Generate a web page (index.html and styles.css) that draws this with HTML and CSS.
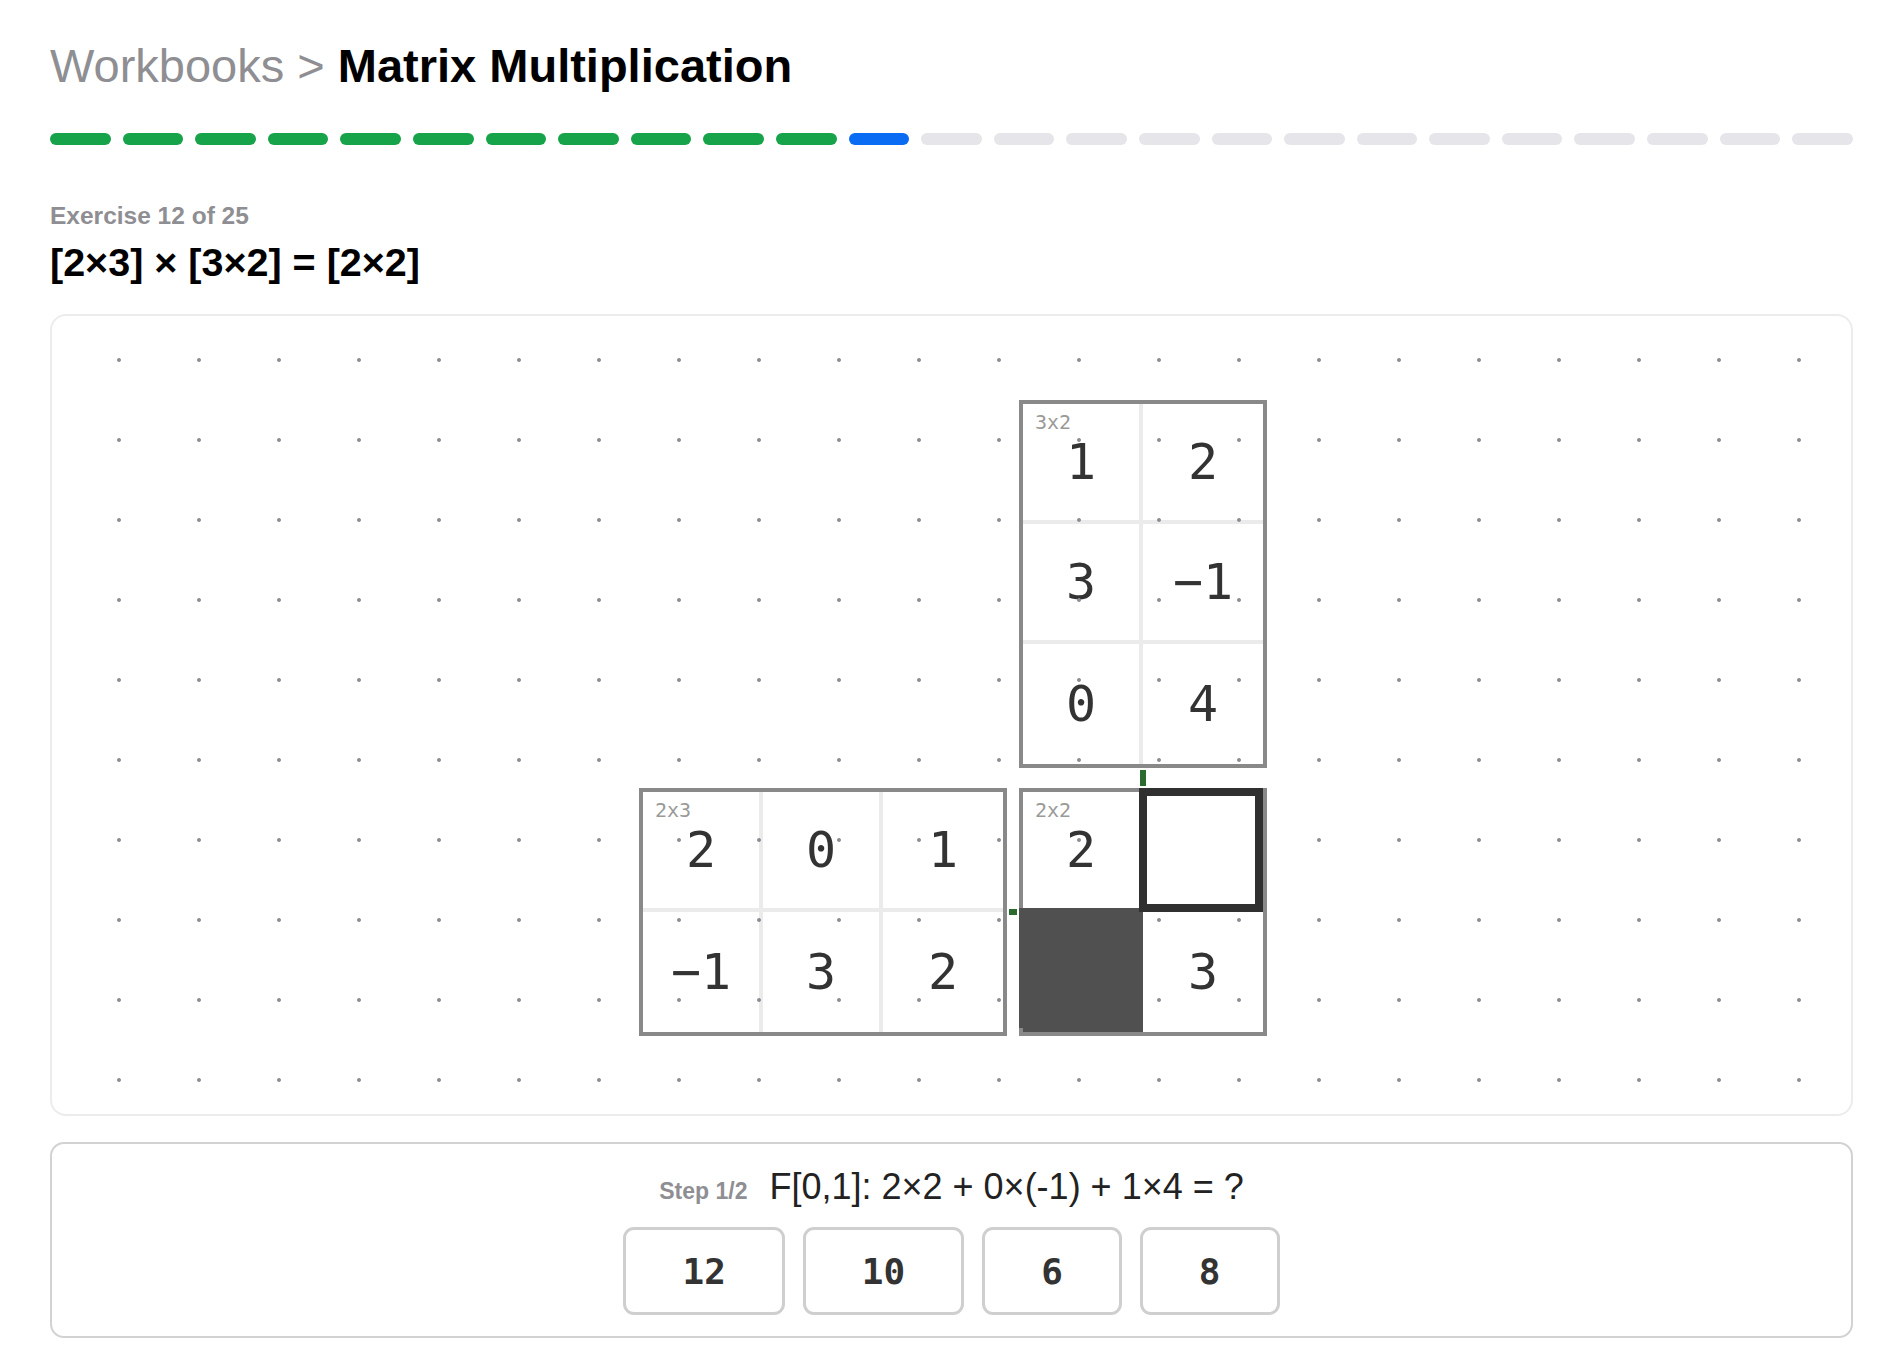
FILE: index.html
```html
<!DOCTYPE html>
<html lang="en">
<head>
<meta charset="utf-8">
<title>Matrix Multiplication</title>
<link rel="stylesheet" href="styles.css">
</head>
<body>
<div class="page">
  <h1 class="title"><span class="crumb">Workbooks &gt; </span><span class="current">Matrix Multiplication</span></h1>

  <div class="progress">
    <span class="seg done"></span><span class="seg done"></span><span class="seg done"></span><span class="seg done"></span><span class="seg done"></span><span class="seg done"></span><span class="seg done"></span><span class="seg done"></span><span class="seg done"></span><span class="seg done"></span><span class="seg done"></span>
    <span class="seg current"></span>
    <span class="seg"></span><span class="seg"></span><span class="seg"></span><span class="seg"></span><span class="seg"></span><span class="seg"></span><span class="seg"></span><span class="seg"></span><span class="seg"></span><span class="seg"></span><span class="seg"></span><span class="seg"></span><span class="seg"></span>
  </div>

  <div class="exercise-meta">Exercise 12 of 25</div>
  <div class="formula">[2×3] × [3×2] = [2×2]</div>

  <div class="canvas">
    <div class="workspace">
      <div class="matrix cols-2 m-right-top">
        <span class="dim">3x2</span>
        <div class="cell">1</div><div class="cell c-last">2</div>
        <div class="cell">3</div><div class="cell c-last">−1</div>
        <div class="cell r-last">0</div><div class="cell c-last r-last">4</div>
      </div>
      <div class="matrix cols-3 m-left-bottom">
        <span class="dim">2x3</span>
        <div class="cell">2</div><div class="cell">0</div><div class="cell c-last">1</div>
        <div class="cell r-last">−1</div><div class="cell r-last">3</div><div class="cell c-last r-last">2</div>
      </div>
      <div class="matrix cols-2 m-right-bottom">
        <span class="dim">2x2</span>
        <div class="cell">2</div><div class="cell c-last active"></div>
        <div class="cell r-last filled"></div><div class="cell c-last r-last">3</div>
      </div>
      <span class="tick tick-v"></span>
      <span class="tick tick-h"></span>
    </div>
    <div class="dots"></div>
  </div>

  <div class="step-panel">
    <div class="step-line">
      <span class="step-label">Step 1/2</span>
      <span class="step-expr">F[0,1]: 2×2 + 0×(-1) + 1×4 = ?</span>
    </div>
    <div class="choices">
      <button class="choice">12</button>
      <button class="choice">10</button>
      <button class="choice">6</button>
      <button class="choice">8</button>
    </div>
  </div>
</div>
</body>
</html>
```

FILE: styles.css
```css
* { box-sizing: border-box; }

html, body {
  margin: 0;
  padding: 0;
  background: #ffffff;
}

body {
  font-family: "Liberation Sans", Arial, sans-serif;
  color: #000;
}

.page {
  padding: 38px 37px 0 50px;
}

.title {
  margin: 0;
  font-size: 47px;
  line-height: 56px;
  font-weight: 400;
  white-space: nowrap;
}

.crumb { color: #8e8e93; font-weight: 400; }
.current { color: #000; font-weight: 700; }

.progress {
  margin-top: 39px;
  display: flex;
  gap: 12px;
}

.seg {
  flex: 1;
  height: 12px;
  border-radius: 6px;
  background: #e5e5ea;
}
.seg.done { background: #17a34a; }
.seg.current { background: #0a6cf2; }

.exercise-meta {
  margin-top: 56px;
  font-size: 24.5px;
  line-height: 30px;
  font-weight: 700;
  color: #8e8e93;
}

.formula {
  margin-top: 8px;
  font-size: 39.5px;
  line-height: 47px;
  font-weight: 700;
  color: #000;
}

.canvas {
  position: relative;
  margin-top: 28px;
  height: 802px;
  border: 2px solid #ececec;
  border-radius: 16px;
  padding: 84px 0 0 587px;
}

.dots {
  position: absolute;
  inset: 0;
  border-radius: 14px;
  pointer-events: none;
  z-index: 1;
  background-image: radial-gradient(circle at 40px 40px, #8e8e96 0, #8e8e96 1.5px, rgba(142,142,150,0) 2.3px);
  background-size: 80px 80px;
  background-position: 27px 4px;
}

.workspace {
  position: relative;
  display: grid;
  grid-template-columns: 368px 248px;
  grid-template-rows: 368px 248px;
  column-gap: 12px;
  row-gap: 20px;
}

.m-right-top { grid-column: 2; grid-row: 1; }
.m-left-bottom { grid-column: 1; grid-row: 2; }
.m-right-bottom { grid-column: 2; grid-row: 2; }

.matrix {
  position: relative;
  display: grid;
  align-self: start;
  justify-self: start;
  border: 4px solid #898989;
  background: #ffffff;
}
.cols-2 { grid-template-columns: repeat(2, 120px); }
.cols-3 { grid-template-columns: repeat(3, 120px); }

.dim {
  position: absolute;
  left: 12px;
  top: 7px;
  font-family: "DejaVu Sans Mono", monospace;
  font-size: 20px;
  line-height: 23px;
  color: #9a9a9a;
}

.cell {
  width: 120px;
  height: 120px;
  border-right: 4px solid #ebebeb;
  border-bottom: 4px solid #ebebeb;
  display: flex;
  align-items: center;
  justify-content: center;
  font-family: "DejaVu Sans Mono", monospace;
  font-size: 50px;
  line-height: 1;
  color: #333333;
}
.cell.c-last { border-right: 0; }
.cell.r-last { border-bottom: 0; }

.cell.filled {
  position: relative;
  z-index: 2;
  background: #505050;
  border-right-color: #505050;
  box-shadow: -4px -4px 0 0 #505050;
}

.cell.active {
  position: relative;
  z-index: 2;
}
.cell.active::after {
  content: "";
  position: absolute;
  top: -4px;
  left: -4px;
  right: 0;
  bottom: -4px;
  border: 8px solid #303030;
  background: #ffffff;
}

.tick {
  position: absolute;
  z-index: 2;
  background: #2c6b30;
}
.tick-v { left: 501px; top: 370px; width: 6px; height: 16px; }
.tick-h { left: 370px; top: 509px; width: 8px; height: 6px; }

.step-panel {
  margin-top: 26px;
  border: 2px solid #d2d2d2;
  border-radius: 14px;
  padding: 23px 0 21px;
  display: flex;
  flex-direction: column;
  align-items: center;
  gap: 16px;
}

.step-line {
  display: flex;
  align-items: baseline;
  gap: 22px;
  line-height: 40px;
}

.step-label {
  font-size: 23px;
  font-weight: 700;
  color: #8e8e93;
}

.step-expr {
  font-size: 36px;
  font-weight: 400;
  color: #222222;
}

.choices {
  display: flex;
  gap: 18px;
}

.choice {
  height: 88px;
  padding: 0 56px;
  border: 3px solid #cfcfcf;
  border-radius: 11px;
  background: #ffffff;
  font-family: "DejaVu Sans Mono", monospace;
  font-size: 36px;
  font-weight: 700;
  color: #333333;
  cursor: pointer;
}
```
